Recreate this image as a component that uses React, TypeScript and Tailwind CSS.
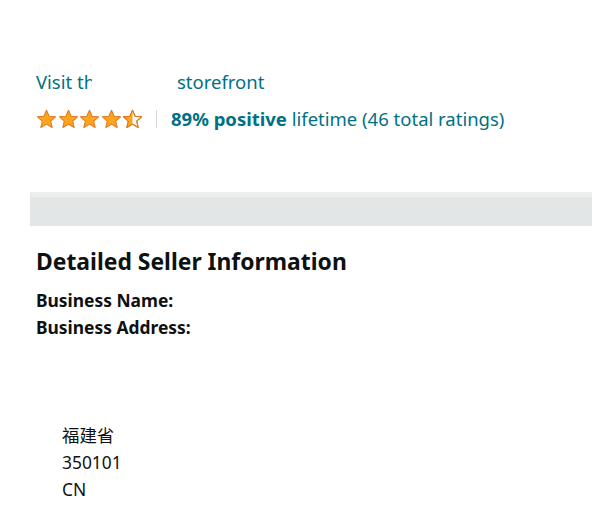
import React from "react";

const STAR = "M10 1.2 L12.6 7 L18.8 7.6 L14.1 11.8 L15.5 18 L10 14.8 L4.5 18 L5.9 11.8 L1.2 7.6 L7.4 7 Z";

function Star({ half = false, id }: { half?: boolean; id: string }) {
  return (
    <svg width="21" height="20" viewBox="0 0 20 19.5" className="block">
      {half ? (
        <>
          <defs>
            <clipPath id={id}>
              <rect x="0" y="0" width="10" height="20" />
            </clipPath>
          </defs>
          <path d={STAR} fill="#fff" stroke="#DE7921" strokeWidth="1" strokeLinejoin="round" />
          <path d={STAR} fill="#FFA41C" clipPath={`url(#${id})`} />
          <path d={STAR} fill="none" stroke="#DE7921" strokeWidth="1" strokeLinejoin="round" />
        </>
      ) : (
        <path d={STAR} fill="#FFA41C" stroke="#DE7921" strokeWidth="1" strokeLinejoin="round" />
      )}
    </svg>
  );
}

export default function App() {
  return (
    <div
      className="w-[592px] h-[516px] bg-white text-[#0f1111] overflow-hidden"
      style={{ fontFamily: '"Noto Sans", "Noto Sans CJK SC", sans-serif' }}
    >
      <div className="pl-[36px] pt-[70px]">
        <div className="flex items-center h-[24px] text-[18.5px] leading-[24px] text-[#007185]">
          <span className="inline-block w-[56px] overflow-hidden whitespace-nowrap">Visit the</span>
          <span className="inline-block w-[85px]" />
          <span>storefront</span>
        </div>
        <div className="flex items-center mt-[13px] h-[24px]">
          <div className="flex items-center gap-[0.5px]">
            <Star id="s1" />
            <Star id="s2" />
            <Star id="s3" />
            <Star id="s4" />
            <Star id="s5" half />
          </div>
          <span className="ml-[13px] w-[1px] h-[18px] bg-[#d5d9d9]" />
          <span className="ml-[14px] text-[18.5px] leading-[24px] text-[#007185] whitespace-nowrap">
            <span className="font-bold">89% positive</span> lifetime (46 total ratings)
          </span>
        </div>
      </div>

      <div className="ml-[30px] mt-[61px] h-[34px] border-l border-[#e3e6e6] flex flex-col">
        <div className="h-[7px] bg-gradient-to-b from-[#eef0f0] to-[#e8eaea] border-b border-[#e0e2e2]" />
        <div className="flex-1 bg-[#e3e6e6]" />
      </div>

      <div className="pl-[36px] pt-[21px]">
        <h1 className="text-[22.9px] leading-[30px] font-bold">Detailed Seller Information</h1>
        <div className="mt-[10px] text-[17.4px] leading-[27px] font-bold">
          <div>Business Name:</div>
          <div>Business Address:</div>
        </div>
      </div>

      <div className="pl-[62px] pt-[81px] text-[17.4px] leading-[27px]">
        <div>福建省</div>
        <div>350101</div>
        <div>CN</div>
      </div>
    </div>
  );
}
